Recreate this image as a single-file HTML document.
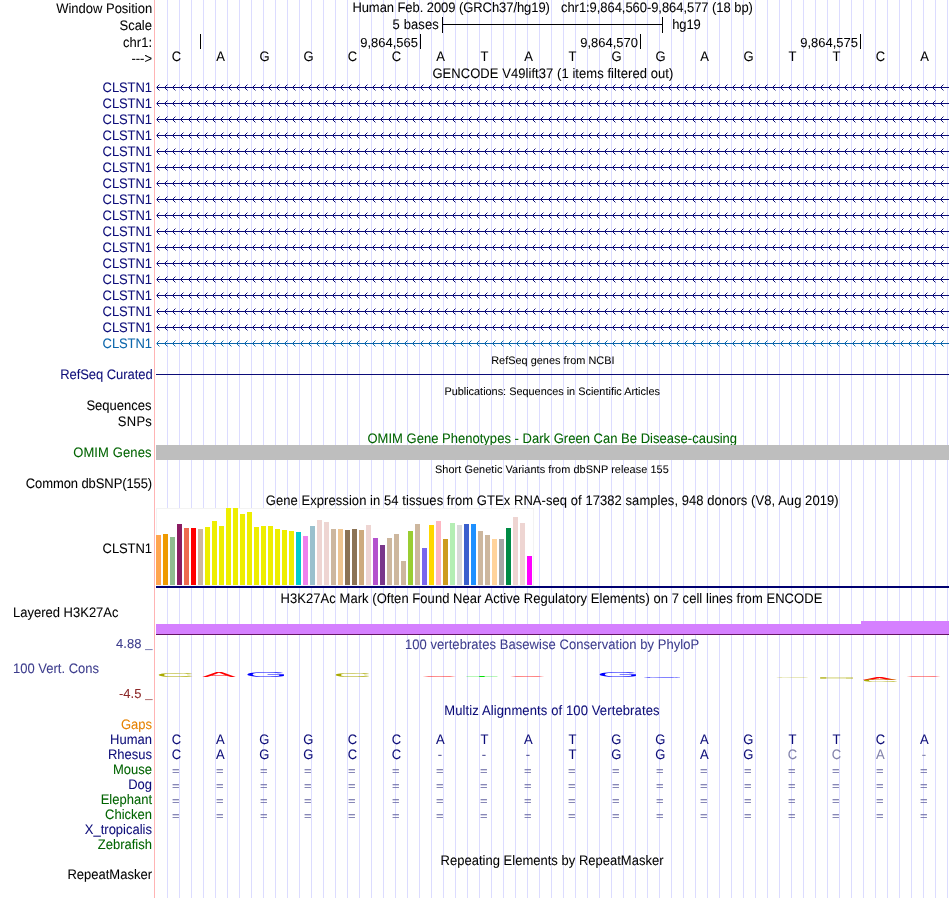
<!DOCTYPE html>
<html><head><meta charset="utf-8"><title>UCSC Genome Browser</title>
<style>
html,body{margin:0;padding:0;background:#fff}
#p{position:relative;width:950px;height:898px;overflow:hidden;will-change:transform;font-family:"Liberation Sans",sans-serif;font-size:13px;color:#000}
.t{position:absolute;white-space:nowrap;line-height:1;-webkit-text-stroke:.06px;text-rendering:geometricPrecision;transform:scaleY(1.06);transform-origin:0 84.65%}
.b{position:absolute}
#g{position:absolute;left:167px;top:0;width:783px;height:898px;background-image:linear-gradient(90deg,#dcdcff 1px,transparent 1px);background-size:12px 100%}
#r{position:absolute;left:154px;top:0;width:1px;height:898px;background:#ffb4b4}
</style></head><body><div id="p"><div id="g"></div><div id="r"></div>
<span id="t1" class="t" style="top:2.00px;left:56.20px;letter-spacing:-0.007px;">Window Position</span>
<span id="t2" class="t" style="top:19.00px;right:798.00px;">Scale</span>
<span id="t3" class="t" style="top:36.00px;right:798.00px;">chr1:</span>
<span id="t4" class="t" style="top:52.00px;right:798.00px;">---&gt;</span>
<span id="t5" class="t" style="top:1.00px;left:352.40px;letter-spacing:-0.068px;">Human Feb. 2009 (GRCh37/hg19)</span>
<span id="t6" class="t" style="top:1.00px;left:561.00px;letter-spacing:-0.058px;">chr1:9,864,560-9,864,577 (18 bp)</span>
<span id="t7" class="t" style="top:17.60px;left:392.60px;letter-spacing:0.117px;">5 bases</span>
<span id="t8" class="t" style="top:17.60px;left:672.20px;letter-spacing:-0.133px;">hg19</span>
<div class="b" style="left:442px;top:17px;width:1px;height:16px;background:#000;"></div>
<div class="b" style="left:662px;top:17px;width:1px;height:16px;background:#000;"></div>
<div class="b" style="left:442px;top:24px;width:221px;height:1px;background:#000;"></div>
<div class="b" style="left:200px;top:34px;width:1px;height:15px;background:#000;"></div>
<div class="b" style="left:420px;top:34px;width:1px;height:15px;background:#000;"></div>
<span id="t9" class="t" style="top:36.00px;transform:scaleY(1);right:532.00px;">9,864,565</span>
<div class="b" style="left:640px;top:34px;width:1px;height:15px;background:#000;"></div>
<span id="t10" class="t" style="top:36.00px;transform:scaleY(1);right:312.00px;">9,864,570</span>
<div class="b" style="left:860px;top:34px;width:1px;height:15px;background:#000;"></div>
<span id="t11" class="t" style="top:36.00px;transform:scaleY(1);right:92.00px;">9,864,575</span>
<span id="t12" class="t" style="top:50.00px;left:156.50px;width:40px;text-align:center;">C</span>
<span id="t13" class="t" style="top:50.00px;left:200.50px;width:40px;text-align:center;">A</span>
<span id="t14" class="t" style="top:50.00px;left:244.50px;width:40px;text-align:center;">G</span>
<span id="t15" class="t" style="top:50.00px;left:288.50px;width:40px;text-align:center;">G</span>
<span id="t16" class="t" style="top:50.00px;left:332.50px;width:40px;text-align:center;">C</span>
<span id="t17" class="t" style="top:50.00px;left:376.50px;width:40px;text-align:center;">C</span>
<span id="t18" class="t" style="top:50.00px;left:420.50px;width:40px;text-align:center;">A</span>
<span id="t19" class="t" style="top:50.00px;left:464.50px;width:40px;text-align:center;">T</span>
<span id="t20" class="t" style="top:50.00px;left:508.50px;width:40px;text-align:center;">A</span>
<span id="t21" class="t" style="top:50.00px;left:552.50px;width:40px;text-align:center;">T</span>
<span id="t22" class="t" style="top:50.00px;left:596.50px;width:40px;text-align:center;">G</span>
<span id="t23" class="t" style="top:50.00px;left:640.50px;width:40px;text-align:center;">G</span>
<span id="t24" class="t" style="top:50.00px;left:684.50px;width:40px;text-align:center;">A</span>
<span id="t25" class="t" style="top:50.00px;left:728.50px;width:40px;text-align:center;">G</span>
<span id="t26" class="t" style="top:50.00px;left:772.50px;width:40px;text-align:center;">T</span>
<span id="t27" class="t" style="top:50.00px;left:816.50px;width:40px;text-align:center;">T</span>
<span id="t28" class="t" style="top:50.00px;left:860.50px;width:40px;text-align:center;">C</span>
<span id="t29" class="t" style="top:50.00px;left:904.50px;width:40px;text-align:center;">A</span>
<span id="t30" class="t" style="top:67.00px;left:432.40px;letter-spacing:0.062px;">GENCODE V49lift37 (1 items filtered out)</span>
<span id="t31" class="t" style="top:81.00px;color:#0c0c78;left:102.60px;letter-spacing:-0.100px;">CLSTN1</span>
<span id="t32" class="t" style="top:97.00px;color:#0c0c78;left:102.60px;letter-spacing:-0.100px;">CLSTN1</span>
<span id="t33" class="t" style="top:113.00px;color:#0c0c78;left:102.60px;letter-spacing:-0.100px;">CLSTN1</span>
<span id="t34" class="t" style="top:129.00px;color:#0c0c78;left:102.60px;letter-spacing:-0.100px;">CLSTN1</span>
<span id="t35" class="t" style="top:145.00px;color:#0c0c78;left:102.60px;letter-spacing:-0.100px;">CLSTN1</span>
<span id="t36" class="t" style="top:161.00px;color:#0c0c78;left:102.60px;letter-spacing:-0.100px;">CLSTN1</span>
<span id="t37" class="t" style="top:177.00px;color:#0c0c78;left:102.60px;letter-spacing:-0.100px;">CLSTN1</span>
<span id="t38" class="t" style="top:193.00px;color:#0c0c78;left:102.60px;letter-spacing:-0.100px;">CLSTN1</span>
<span id="t39" class="t" style="top:209.00px;color:#0c0c78;left:102.60px;letter-spacing:-0.100px;">CLSTN1</span>
<span id="t40" class="t" style="top:225.00px;color:#0c0c78;left:102.60px;letter-spacing:-0.100px;">CLSTN1</span>
<span id="t41" class="t" style="top:241.00px;color:#0c0c78;left:102.60px;letter-spacing:-0.100px;">CLSTN1</span>
<span id="t42" class="t" style="top:257.00px;color:#0c0c78;left:102.60px;letter-spacing:-0.100px;">CLSTN1</span>
<span id="t43" class="t" style="top:273.00px;color:#0c0c78;left:102.60px;letter-spacing:-0.100px;">CLSTN1</span>
<span id="t44" class="t" style="top:289.00px;color:#0c0c78;left:102.60px;letter-spacing:-0.100px;">CLSTN1</span>
<span id="t45" class="t" style="top:305.00px;color:#0c0c78;left:102.60px;letter-spacing:-0.100px;">CLSTN1</span>
<span id="t46" class="t" style="top:321.00px;color:#0c0c78;left:102.60px;letter-spacing:-0.100px;">CLSTN1</span>
<span id="t47" class="t" style="top:337.00px;color:#0c66ab;left:102.60px;letter-spacing:-0.100px;">CLSTN1</span>
<svg class="b" style="left:0;top:0" width="950" height="898" viewBox="0 0 950 898" shape-rendering="crispEdges"><defs><pattern id="cn" x="156" y="0" width="8" height="7" patternUnits="userSpaceOnUse"><g fill="#0c0c78"><rect x="1" y="2" width="1" height="1"/><rect x="1" y="4" width="1" height="1"/><rect x="2" y="1" width="1" height="1"/><rect x="2" y="5" width="1" height="1"/><rect x="3" y="0" width="1" height="1" opacity=".45"/><rect x="3" y="6" width="1" height="1" opacity=".45"/></g></pattern><pattern id="ct" x="156" y="0" width="8" height="7" patternUnits="userSpaceOnUse"><g fill="#0c66ab"><rect x="1" y="2" width="1" height="1"/><rect x="1" y="4" width="1" height="1"/><rect x="2" y="1" width="1" height="1"/><rect x="2" y="5" width="1" height="1"/><rect x="3" y="0" width="1" height="1" opacity=".45"/><rect x="3" y="6" width="1" height="1" opacity=".45"/></g></pattern></defs><g transform="translate(0,84)"><rect x="156" y="0" width="788" height="7" fill="url(#cn)"/><rect x="157" y="3" width="792" height="1" fill="#0c0c78"/><rect x="156" y="3" width="1" height="1" fill="#0c0c78" opacity=".5"/></g><g transform="translate(0,100)"><rect x="156" y="0" width="788" height="7" fill="url(#cn)"/><rect x="157" y="3" width="792" height="1" fill="#0c0c78"/><rect x="156" y="3" width="1" height="1" fill="#0c0c78" opacity=".5"/></g><g transform="translate(0,116)"><rect x="156" y="0" width="788" height="7" fill="url(#cn)"/><rect x="157" y="3" width="792" height="1" fill="#0c0c78"/><rect x="156" y="3" width="1" height="1" fill="#0c0c78" opacity=".5"/></g><g transform="translate(0,132)"><rect x="156" y="0" width="788" height="7" fill="url(#cn)"/><rect x="157" y="3" width="792" height="1" fill="#0c0c78"/><rect x="156" y="3" width="1" height="1" fill="#0c0c78" opacity=".5"/></g><g transform="translate(0,148)"><rect x="156" y="0" width="788" height="7" fill="url(#cn)"/><rect x="157" y="3" width="792" height="1" fill="#0c0c78"/><rect x="156" y="3" width="1" height="1" fill="#0c0c78" opacity=".5"/></g><g transform="translate(0,164)"><rect x="156" y="0" width="788" height="7" fill="url(#cn)"/><rect x="157" y="3" width="792" height="1" fill="#0c0c78"/><rect x="156" y="3" width="1" height="1" fill="#0c0c78" opacity=".5"/></g><g transform="translate(0,180)"><rect x="156" y="0" width="788" height="7" fill="url(#cn)"/><rect x="157" y="3" width="792" height="1" fill="#0c0c78"/><rect x="156" y="3" width="1" height="1" fill="#0c0c78" opacity=".5"/></g><g transform="translate(0,196)"><rect x="156" y="0" width="788" height="7" fill="url(#cn)"/><rect x="157" y="3" width="792" height="1" fill="#0c0c78"/><rect x="156" y="3" width="1" height="1" fill="#0c0c78" opacity=".5"/></g><g transform="translate(0,212)"><rect x="156" y="0" width="788" height="7" fill="url(#cn)"/><rect x="157" y="3" width="792" height="1" fill="#0c0c78"/><rect x="156" y="3" width="1" height="1" fill="#0c0c78" opacity=".5"/></g><g transform="translate(0,228)"><rect x="156" y="0" width="788" height="7" fill="url(#cn)"/><rect x="157" y="3" width="792" height="1" fill="#0c0c78"/><rect x="156" y="3" width="1" height="1" fill="#0c0c78" opacity=".5"/></g><g transform="translate(0,244)"><rect x="156" y="0" width="788" height="7" fill="url(#cn)"/><rect x="157" y="3" width="792" height="1" fill="#0c0c78"/><rect x="156" y="3" width="1" height="1" fill="#0c0c78" opacity=".5"/></g><g transform="translate(0,260)"><rect x="156" y="0" width="788" height="7" fill="url(#cn)"/><rect x="157" y="3" width="792" height="1" fill="#0c0c78"/><rect x="156" y="3" width="1" height="1" fill="#0c0c78" opacity=".5"/></g><g transform="translate(0,276)"><rect x="156" y="0" width="788" height="7" fill="url(#cn)"/><rect x="157" y="3" width="792" height="1" fill="#0c0c78"/><rect x="156" y="3" width="1" height="1" fill="#0c0c78" opacity=".5"/></g><g transform="translate(0,292)"><rect x="156" y="0" width="788" height="7" fill="url(#cn)"/><rect x="157" y="3" width="792" height="1" fill="#0c0c78"/><rect x="156" y="3" width="1" height="1" fill="#0c0c78" opacity=".5"/></g><g transform="translate(0,308)"><rect x="156" y="0" width="788" height="7" fill="url(#cn)"/><rect x="157" y="3" width="792" height="1" fill="#0c0c78"/><rect x="156" y="3" width="1" height="1" fill="#0c0c78" opacity=".5"/></g><g transform="translate(0,324)"><rect x="156" y="0" width="788" height="7" fill="url(#cn)"/><rect x="157" y="3" width="792" height="1" fill="#0c0c78"/><rect x="156" y="3" width="1" height="1" fill="#0c0c78" opacity=".5"/></g><g transform="translate(0,340)"><rect x="156" y="0" width="788" height="7" fill="url(#ct)"/><rect x="157" y="3" width="792" height="1" fill="#0c66ab"/><rect x="156" y="3" width="1" height="1" fill="#0c66ab" opacity=".5"/></g></svg>
<span id="t48" class="t" style="top:355.97px;font-size:10.9px;transform:scaleY(1);left:491.20px;letter-spacing:0.024px;">RefSeq genes from NCBI</span>
<span id="t49" class="t" style="top:368.00px;color:#0c0c78;left:60.20px;letter-spacing:-0.054px;">RefSeq Curated</span>
<div class="b" style="left:156px;top:374px;width:793px;height:1px;background:#0c0c78;"></div>
<span id="t50" class="t" style="top:386.77px;font-size:10.9px;transform:scaleY(1);left:444.40px;">Publications: Sequences in Scientific Articles</span>
<span id="t51" class="t" style="top:399.00px;left:86.40px;">Sequences</span>
<span id="t52" class="t" style="top:415.00px;left:117.80px;letter-spacing:0.267px;">SNPs</span>
<span id="t53" class="t" style="top:431.50px;color:#006400;left:367.40px;letter-spacing:0.022px;">OMIM Gene Phenotypes - Dark Green Can Be Disease-causing</span>
<span id="t54" class="t" style="top:446.00px;color:#006400;left:73.20px;letter-spacing:0.111px;">OMIM Genes</span>
<div class="b" style="left:156px;top:445px;width:793px;height:15px;background:#bebebe;"></div>
<span id="t55" class="t" style="top:464.97px;font-size:10.9px;transform:scaleY(1);left:435.00px;letter-spacing:0.066px;">Short Genetic Variants from dbSNP release 155</span>
<span id="t56" class="t" style="top:477.30px;left:25.80px;letter-spacing:-0.094px;">Common dbSNP(155)</span>
<span id="t57" class="t" style="top:493.50px;left:265.80px;letter-spacing:0.062px;">Gene Expression in 54 tissues from GTEx RNA-seq of 17382 samples, 948 donors (V8, Aug 2019)</span>
<span id="t58" class="t" style="top:542.40px;left:102.60px;letter-spacing:-0.100px;">CLSTN1</span>
<div class="b" style="left:156px;top:508px;width:378px;height:78px;background:#fff;box-sizing:border-box;border:1px solid #f3f3f3"></div>
<div class="b" style="left:156px;top:535px;width:5px;height:50px;background:rgb(255,165,79);"></div>
<div class="b" style="left:163px;top:534px;width:5px;height:51px;background:rgb(238,154,0);"></div>
<div class="b" style="left:170px;top:537px;width:5px;height:48px;background:rgb(143,188,143);"></div>
<div class="b" style="left:177px;top:524px;width:5px;height:61px;background:rgb(139,28,98);"></div>
<div class="b" style="left:184px;top:528px;width:5px;height:57px;background:rgb(238,106,80);"></div>
<div class="b" style="left:191px;top:528px;width:5px;height:57px;background:rgb(255,0,0);"></div>
<div class="b" style="left:198px;top:529px;width:5px;height:56px;background:rgb(205,183,158);"></div>
<div class="b" style="left:205px;top:527px;width:5px;height:58px;background:rgb(238,238,0);"></div>
<div class="b" style="left:212px;top:521px;width:5px;height:64px;background:rgb(238,238,0);"></div>
<div class="b" style="left:219px;top:526px;width:5px;height:59px;background:rgb(238,238,0);"></div>
<div class="b" style="left:226px;top:508px;width:5px;height:77px;background:rgb(238,238,0);"></div>
<div class="b" style="left:233px;top:508px;width:5px;height:77px;background:rgb(238,238,0);"></div>
<div class="b" style="left:240px;top:514px;width:5px;height:71px;background:rgb(238,238,0);"></div>
<div class="b" style="left:247px;top:512px;width:5px;height:73px;background:rgb(238,238,0);"></div>
<div class="b" style="left:254px;top:527px;width:5px;height:58px;background:rgb(238,238,0);"></div>
<div class="b" style="left:261px;top:526px;width:5px;height:59px;background:rgb(238,238,0);"></div>
<div class="b" style="left:268px;top:526px;width:5px;height:59px;background:rgb(238,238,0);"></div>
<div class="b" style="left:275px;top:529px;width:5px;height:56px;background:rgb(238,238,0);"></div>
<div class="b" style="left:282px;top:530px;width:5px;height:55px;background:rgb(238,238,0);"></div>
<div class="b" style="left:289px;top:531px;width:5px;height:54px;background:rgb(238,238,0);"></div>
<div class="b" style="left:296px;top:532px;width:5px;height:53px;background:rgb(0,205,205);"></div>
<div class="b" style="left:303px;top:536px;width:5px;height:49px;background:rgb(238,130,238);"></div>
<div class="b" style="left:310px;top:526px;width:5px;height:59px;background:rgb(154,192,205);"></div>
<div class="b" style="left:317px;top:520px;width:5px;height:65px;background:rgb(238,213,210);"></div>
<div class="b" style="left:324px;top:522px;width:5px;height:63px;background:rgb(238,213,210);"></div>
<div class="b" style="left:331px;top:529px;width:5px;height:56px;background:rgb(205,183,158);"></div>
<div class="b" style="left:338px;top:529px;width:5px;height:56px;background:rgb(238,197,145);"></div>
<div class="b" style="left:345px;top:530px;width:5px;height:55px;background:rgb(139,115,85);"></div>
<div class="b" style="left:352px;top:529px;width:5px;height:56px;background:rgb(139,115,85);"></div>
<div class="b" style="left:359px;top:530px;width:5px;height:55px;background:rgb(205,170,125);"></div>
<div class="b" style="left:366px;top:525px;width:5px;height:60px;background:rgb(238,213,210);"></div>
<div class="b" style="left:373px;top:538px;width:5px;height:47px;background:rgb(180,82,205);"></div>
<div class="b" style="left:380px;top:545px;width:5px;height:40px;background:rgb(122,55,139);"></div>
<div class="b" style="left:387px;top:538px;width:5px;height:47px;background:rgb(205,183,158);"></div>
<div class="b" style="left:394px;top:534px;width:5px;height:51px;background:rgb(205,183,158);"></div>
<div class="b" style="left:401px;top:561px;width:5px;height:24px;background:rgb(205,183,158);"></div>
<div class="b" style="left:408px;top:531px;width:5px;height:54px;background:rgb(154,205,50);"></div>
<div class="b" style="left:415px;top:524px;width:5px;height:61px;background:rgb(205,183,158);"></div>
<div class="b" style="left:422px;top:548px;width:5px;height:37px;background:rgb(122,103,238);"></div>
<div class="b" style="left:429px;top:525px;width:5px;height:60px;background:rgb(255,215,0);"></div>
<div class="b" style="left:436px;top:521px;width:5px;height:64px;background:rgb(255,182,193);"></div>
<div class="b" style="left:443px;top:539px;width:5px;height:46px;background:rgb(205,155,29);"></div>
<div class="b" style="left:450px;top:523px;width:5px;height:62px;background:rgb(180,238,180);"></div>
<div class="b" style="left:457px;top:525px;width:5px;height:60px;background:rgb(217,217,217);"></div>
<div class="b" style="left:464px;top:524px;width:5px;height:61px;background:rgb(58,95,205);"></div>
<div class="b" style="left:471px;top:524px;width:5px;height:61px;background:rgb(30,144,255);"></div>
<div class="b" style="left:478px;top:531px;width:5px;height:54px;background:rgb(205,183,158);"></div>
<div class="b" style="left:485px;top:535px;width:5px;height:50px;background:rgb(205,183,158);"></div>
<div class="b" style="left:492px;top:539px;width:5px;height:46px;background:rgb(255,211,155);"></div>
<div class="b" style="left:499px;top:539px;width:5px;height:46px;background:rgb(166,166,166);"></div>
<div class="b" style="left:506px;top:528px;width:5px;height:57px;background:rgb(0,139,69);"></div>
<div class="b" style="left:513px;top:517px;width:5px;height:68px;background:rgb(238,213,210);"></div>
<div class="b" style="left:520px;top:523px;width:5px;height:62px;background:rgb(238,213,210);"></div>
<div class="b" style="left:527px;top:556px;width:5px;height:29px;background:rgb(255,0,255);"></div>
<div class="b" style="left:156px;top:586px;width:793px;height:2px;background:#000070;"></div>
<span id="t59" class="t" style="top:591.70px;left:280.60px;letter-spacing:0.049px;">H3K27Ac Mark (Often Found Near Active Regulatory Elements) on 7 cell lines from ENCODE</span>
<span id="t60" class="t" style="top:606.00px;left:13.00px;">Layered H3K27Ac</span>
<div class="b" style="left:156px;top:624px;width:705px;height:10px;background:#d580ff;"></div>
<div class="b" style="left:861px;top:621px;width:88px;height:13px;background:#d580ff;"></div>
<div class="b" style="left:156px;top:634px;width:793px;height:1px;background:#641464;"></div>
<span id="t61" class="t" style="top:637.70px;color:#3c3c8c;left:405.00px;letter-spacing:0.050px;">100 vertebrates Basewise Conservation by PhyloP</span>
<span id="t62" class="t" style="top:637.00px;color:#3c3c8c;transform:scaleY(1);right:808.60px;">4.88</span>
<span id="t63" class="t" style="top:636.70px;color:#3c3c8c;transform:scaleY(0.8);right:797.50px;">_</span>
<span id="t64" class="t" style="top:661.80px;color:#3c3c8c;left:13.00px;">100 Vert. Cons</span>
<span id="t65" class="t" style="top:687.00px;color:#8c2828;transform:scaleY(1);right:808.60px;">-4.5</span>
<span id="t66" class="t" style="top:686.70px;color:#8c2828;transform:scaleY(0.8);right:797.50px;">_</span>
<svg class="b" style="left:0;top:636px" width="950" height="64" viewBox="0 636 950 64" font-family="Liberation Sans, sans-serif" font-size="10"><text transform="translate(156.11,677.14) scale(5.381,0.5915)" fill="#aaaa00">C</text><text transform="translate(202.35,677.00) scale(5.030,0.7591)" fill="#ff0000">A</text><text transform="translate(244.49,676.93) scale(5.618,0.7042)" fill="#0000ff">G</text><text transform="translate(333.12,677.14) scale(5.365,0.5915)" fill="#aaaa00">C</text><text transform="translate(465.02,676.90) scale(5.522,0.1159)" fill="#00e000">T</text><text transform="translate(596.81,676.93) scale(5.588,0.7042)" fill="#0000ff">G</text><text transform="translate(641.47,677.94) scale(5.466,0.1268)" fill="#0000ff">G</text><text transform="translate(773.72,677.79) scale(5.159,0.0845)" fill="#aaaa00" fill-opacity="0.5">C</text><text transform="translate(862.14,680.10) scale(5.136,0.4088)" fill="#ff0000">A</text><text transform="translate(861.01,681.97) scale(5.381,0.2817)" fill="#aaaa00">C</text><defs><linearGradient id="ra"><stop offset="0" stop-color="#f00" stop-opacity="0"/><stop offset=".18" stop-color="#f00" stop-opacity=".5"/><stop offset=".5" stop-color="#f00" stop-opacity=".42"/><stop offset=".82" stop-color="#f00" stop-opacity=".5"/><stop offset="1" stop-color="#f00" stop-opacity="0"/></linearGradient></defs><rect x="422.6" y="676" width="33.4" height="1" fill="url(#ra)"/><rect x="510.2" y="676" width="34.2" height="1" fill="url(#ra)"/><rect x="906.4" y="676" width="34.2" height="1" fill="url(#ra)"/><g fill="#aaaa00"><rect x="820.2" y="677" width="32.8" height="1.8" opacity=".32"/><rect x="820.2" y="677" width="6" height="1.8" opacity=".55"/><rect x="846" y="677.6" width="7" height="1.3" opacity=".3"/></g></svg>
<span id="t67" class="t" style="top:703.50px;color:#0c0c78;left:444.20px;letter-spacing:0.123px;">Multiz Alignments of 100 Vertebrates</span>
<span id="t68" class="t" style="top:718.00px;color:#e68200;right:798.00px;">Gaps</span>
<span id="t69" class="t" style="top:733.00px;color:#0c0c78;right:798.00px;">Human</span>
<span id="t70" class="t" style="top:748.00px;color:#0c0c78;right:798.00px;">Rhesus</span>
<span id="t71" class="t" style="top:763.00px;color:#006400;right:798.00px;">Mouse</span>
<span id="t72" class="t" style="top:778.00px;color:#0c0c78;right:798.00px;">Dog</span>
<span id="t73" class="t" style="top:793.00px;color:#006400;right:798.00px;">Elephant</span>
<span id="t74" class="t" style="top:808.00px;color:#006400;right:798.00px;">Chicken</span>
<span id="t75" class="t" style="top:823.00px;color:#0c0c78;right:798.00px;">X_tropicalis</span>
<span id="t76" class="t" style="top:838.00px;color:#006400;right:798.00px;">Zebrafish</span>
<span id="t77" class="t" style="top:733.00px;color:#0c0c78;left:156.40px;width:40px;text-align:center;">C</span>
<span id="t78" class="t" style="top:733.00px;color:#0c0c78;left:200.40px;width:40px;text-align:center;">A</span>
<span id="t79" class="t" style="top:733.00px;color:#0c0c78;left:244.40px;width:40px;text-align:center;">G</span>
<span id="t80" class="t" style="top:733.00px;color:#0c0c78;left:288.40px;width:40px;text-align:center;">G</span>
<span id="t81" class="t" style="top:733.00px;color:#0c0c78;left:332.40px;width:40px;text-align:center;">C</span>
<span id="t82" class="t" style="top:733.00px;color:#0c0c78;left:376.40px;width:40px;text-align:center;">C</span>
<span id="t83" class="t" style="top:733.00px;color:#0c0c78;left:420.40px;width:40px;text-align:center;">A</span>
<span id="t84" class="t" style="top:733.00px;color:#0c0c78;left:464.40px;width:40px;text-align:center;">T</span>
<span id="t85" class="t" style="top:733.00px;color:#0c0c78;left:508.40px;width:40px;text-align:center;">A</span>
<span id="t86" class="t" style="top:733.00px;color:#0c0c78;left:552.40px;width:40px;text-align:center;">T</span>
<span id="t87" class="t" style="top:733.00px;color:#0c0c78;left:596.40px;width:40px;text-align:center;">G</span>
<span id="t88" class="t" style="top:733.00px;color:#0c0c78;left:640.40px;width:40px;text-align:center;">G</span>
<span id="t89" class="t" style="top:733.00px;color:#0c0c78;left:684.40px;width:40px;text-align:center;">A</span>
<span id="t90" class="t" style="top:733.00px;color:#0c0c78;left:728.40px;width:40px;text-align:center;">G</span>
<span id="t91" class="t" style="top:733.00px;color:#0c0c78;left:772.40px;width:40px;text-align:center;">T</span>
<span id="t92" class="t" style="top:733.00px;color:#0c0c78;left:816.40px;width:40px;text-align:center;">T</span>
<span id="t93" class="t" style="top:733.00px;color:#0c0c78;left:860.40px;width:40px;text-align:center;">C</span>
<span id="t94" class="t" style="top:733.00px;color:#0c0c78;left:904.40px;width:40px;text-align:center;">A</span>
<span id="t95" class="t" style="top:748.00px;color:#0c0c78;left:156.40px;width:40px;text-align:center;">C</span>
<span id="t96" class="t" style="top:748.00px;color:#0c0c78;left:200.40px;width:40px;text-align:center;">A</span>
<span id="t97" class="t" style="top:748.00px;color:#0c0c78;left:244.40px;width:40px;text-align:center;">G</span>
<span id="t98" class="t" style="top:748.00px;color:#0c0c78;left:288.40px;width:40px;text-align:center;">G</span>
<span id="t99" class="t" style="top:748.00px;color:#0c0c78;left:332.40px;width:40px;text-align:center;">C</span>
<span id="t100" class="t" style="top:748.00px;color:#0c0c78;left:376.40px;width:40px;text-align:center;">C</span>
<span id="t101" class="t" style="top:748.40px;color:#505096;left:420.00px;width:40px;text-align:center;">-</span>
<span id="t102" class="t" style="top:748.40px;color:#505096;left:464.00px;width:40px;text-align:center;">-</span>
<span id="t103" class="t" style="top:748.40px;color:#505096;left:508.00px;width:40px;text-align:center;">-</span>
<span id="t104" class="t" style="top:748.00px;color:#0c0c78;left:552.40px;width:40px;text-align:center;">T</span>
<span id="t105" class="t" style="top:748.00px;color:#0c0c78;left:596.40px;width:40px;text-align:center;">G</span>
<span id="t106" class="t" style="top:748.00px;color:#0c0c78;left:640.40px;width:40px;text-align:center;">G</span>
<span id="t107" class="t" style="top:748.00px;color:#0c0c78;left:684.40px;width:40px;text-align:center;">A</span>
<span id="t108" class="t" style="top:748.00px;color:#0c0c78;left:728.40px;width:40px;text-align:center;">G</span>
<span id="t109" class="t" style="top:748.00px;color:#8282aa;left:772.40px;width:40px;text-align:center;">C</span>
<span id="t110" class="t" style="top:748.00px;color:#8282aa;left:816.40px;width:40px;text-align:center;">C</span>
<span id="t111" class="t" style="top:748.00px;color:#8282aa;left:860.40px;width:40px;text-align:center;">A</span>
<span id="t112" class="t" style="top:748.40px;color:#8282aa;left:904.00px;width:40px;text-align:center;">-</span>
<span id="t113" class="t" style="top:763.60px;color:#6464a0;transform:scaleY(0.9);left:155.90px;width:40px;text-align:center;">=</span>
<span id="t114" class="t" style="top:763.60px;color:#6464a0;transform:scaleY(0.9);left:199.90px;width:40px;text-align:center;">=</span>
<span id="t115" class="t" style="top:763.60px;color:#6464a0;transform:scaleY(0.9);left:243.90px;width:40px;text-align:center;">=</span>
<span id="t116" class="t" style="top:763.60px;color:#6464a0;transform:scaleY(0.9);left:287.90px;width:40px;text-align:center;">=</span>
<span id="t117" class="t" style="top:763.60px;color:#6464a0;transform:scaleY(0.9);left:331.90px;width:40px;text-align:center;">=</span>
<span id="t118" class="t" style="top:763.60px;color:#6464a0;transform:scaleY(0.9);left:375.90px;width:40px;text-align:center;">=</span>
<span id="t119" class="t" style="top:763.60px;color:#6464a0;transform:scaleY(0.9);left:419.90px;width:40px;text-align:center;">=</span>
<span id="t120" class="t" style="top:763.60px;color:#6464a0;transform:scaleY(0.9);left:463.90px;width:40px;text-align:center;">=</span>
<span id="t121" class="t" style="top:763.60px;color:#6464a0;transform:scaleY(0.9);left:507.90px;width:40px;text-align:center;">=</span>
<span id="t122" class="t" style="top:763.60px;color:#6464a0;transform:scaleY(0.9);left:551.90px;width:40px;text-align:center;">=</span>
<span id="t123" class="t" style="top:763.60px;color:#6464a0;transform:scaleY(0.9);left:595.90px;width:40px;text-align:center;">=</span>
<span id="t124" class="t" style="top:763.60px;color:#6464a0;transform:scaleY(0.9);left:639.90px;width:40px;text-align:center;">=</span>
<span id="t125" class="t" style="top:763.60px;color:#6464a0;transform:scaleY(0.9);left:683.90px;width:40px;text-align:center;">=</span>
<span id="t126" class="t" style="top:763.60px;color:#6464a0;transform:scaleY(0.9);left:727.90px;width:40px;text-align:center;">=</span>
<span id="t127" class="t" style="top:763.60px;color:#6464a0;transform:scaleY(0.9);left:771.90px;width:40px;text-align:center;">=</span>
<span id="t128" class="t" style="top:763.60px;color:#6464a0;transform:scaleY(0.9);left:815.90px;width:40px;text-align:center;">=</span>
<span id="t129" class="t" style="top:763.60px;color:#6464a0;transform:scaleY(0.9);left:859.90px;width:40px;text-align:center;">=</span>
<span id="t130" class="t" style="top:763.60px;color:#6464a0;transform:scaleY(0.9);left:903.90px;width:40px;text-align:center;">=</span>
<span id="t131" class="t" style="top:778.60px;color:#6464a0;transform:scaleY(0.9);left:155.90px;width:40px;text-align:center;">=</span>
<span id="t132" class="t" style="top:778.60px;color:#6464a0;transform:scaleY(0.9);left:199.90px;width:40px;text-align:center;">=</span>
<span id="t133" class="t" style="top:778.60px;color:#6464a0;transform:scaleY(0.9);left:243.90px;width:40px;text-align:center;">=</span>
<span id="t134" class="t" style="top:778.60px;color:#6464a0;transform:scaleY(0.9);left:287.90px;width:40px;text-align:center;">=</span>
<span id="t135" class="t" style="top:778.60px;color:#6464a0;transform:scaleY(0.9);left:331.90px;width:40px;text-align:center;">=</span>
<span id="t136" class="t" style="top:778.60px;color:#6464a0;transform:scaleY(0.9);left:375.90px;width:40px;text-align:center;">=</span>
<span id="t137" class="t" style="top:778.60px;color:#6464a0;transform:scaleY(0.9);left:419.90px;width:40px;text-align:center;">=</span>
<span id="t138" class="t" style="top:778.60px;color:#6464a0;transform:scaleY(0.9);left:463.90px;width:40px;text-align:center;">=</span>
<span id="t139" class="t" style="top:778.60px;color:#6464a0;transform:scaleY(0.9);left:507.90px;width:40px;text-align:center;">=</span>
<span id="t140" class="t" style="top:778.60px;color:#6464a0;transform:scaleY(0.9);left:551.90px;width:40px;text-align:center;">=</span>
<span id="t141" class="t" style="top:778.60px;color:#6464a0;transform:scaleY(0.9);left:595.90px;width:40px;text-align:center;">=</span>
<span id="t142" class="t" style="top:778.60px;color:#6464a0;transform:scaleY(0.9);left:639.90px;width:40px;text-align:center;">=</span>
<span id="t143" class="t" style="top:778.60px;color:#6464a0;transform:scaleY(0.9);left:683.90px;width:40px;text-align:center;">=</span>
<span id="t144" class="t" style="top:778.60px;color:#6464a0;transform:scaleY(0.9);left:727.90px;width:40px;text-align:center;">=</span>
<span id="t145" class="t" style="top:778.60px;color:#6464a0;transform:scaleY(0.9);left:771.90px;width:40px;text-align:center;">=</span>
<span id="t146" class="t" style="top:778.60px;color:#6464a0;transform:scaleY(0.9);left:815.90px;width:40px;text-align:center;">=</span>
<span id="t147" class="t" style="top:778.60px;color:#6464a0;transform:scaleY(0.9);left:859.90px;width:40px;text-align:center;">=</span>
<span id="t148" class="t" style="top:778.60px;color:#6464a0;transform:scaleY(0.9);left:903.90px;width:40px;text-align:center;">=</span>
<span id="t149" class="t" style="top:793.60px;color:#6464a0;transform:scaleY(0.9);left:155.90px;width:40px;text-align:center;">=</span>
<span id="t150" class="t" style="top:793.60px;color:#6464a0;transform:scaleY(0.9);left:199.90px;width:40px;text-align:center;">=</span>
<span id="t151" class="t" style="top:793.60px;color:#6464a0;transform:scaleY(0.9);left:243.90px;width:40px;text-align:center;">=</span>
<span id="t152" class="t" style="top:793.60px;color:#6464a0;transform:scaleY(0.9);left:287.90px;width:40px;text-align:center;">=</span>
<span id="t153" class="t" style="top:793.60px;color:#6464a0;transform:scaleY(0.9);left:331.90px;width:40px;text-align:center;">=</span>
<span id="t154" class="t" style="top:793.60px;color:#6464a0;transform:scaleY(0.9);left:375.90px;width:40px;text-align:center;">=</span>
<span id="t155" class="t" style="top:793.60px;color:#6464a0;transform:scaleY(0.9);left:419.90px;width:40px;text-align:center;">=</span>
<span id="t156" class="t" style="top:793.60px;color:#6464a0;transform:scaleY(0.9);left:463.90px;width:40px;text-align:center;">=</span>
<span id="t157" class="t" style="top:793.60px;color:#6464a0;transform:scaleY(0.9);left:507.90px;width:40px;text-align:center;">=</span>
<span id="t158" class="t" style="top:793.60px;color:#6464a0;transform:scaleY(0.9);left:551.90px;width:40px;text-align:center;">=</span>
<span id="t159" class="t" style="top:793.60px;color:#6464a0;transform:scaleY(0.9);left:595.90px;width:40px;text-align:center;">=</span>
<span id="t160" class="t" style="top:793.60px;color:#6464a0;transform:scaleY(0.9);left:639.90px;width:40px;text-align:center;">=</span>
<span id="t161" class="t" style="top:793.60px;color:#6464a0;transform:scaleY(0.9);left:683.90px;width:40px;text-align:center;">=</span>
<span id="t162" class="t" style="top:793.60px;color:#6464a0;transform:scaleY(0.9);left:727.90px;width:40px;text-align:center;">=</span>
<span id="t163" class="t" style="top:793.60px;color:#6464a0;transform:scaleY(0.9);left:771.90px;width:40px;text-align:center;">=</span>
<span id="t164" class="t" style="top:793.60px;color:#6464a0;transform:scaleY(0.9);left:815.90px;width:40px;text-align:center;">=</span>
<span id="t165" class="t" style="top:793.60px;color:#6464a0;transform:scaleY(0.9);left:859.90px;width:40px;text-align:center;">=</span>
<span id="t166" class="t" style="top:793.60px;color:#6464a0;transform:scaleY(0.9);left:903.90px;width:40px;text-align:center;">=</span>
<span id="t167" class="t" style="top:808.60px;color:#6464a0;transform:scaleY(0.9);left:155.90px;width:40px;text-align:center;">=</span>
<span id="t168" class="t" style="top:808.60px;color:#6464a0;transform:scaleY(0.9);left:199.90px;width:40px;text-align:center;">=</span>
<span id="t169" class="t" style="top:808.60px;color:#6464a0;transform:scaleY(0.9);left:243.90px;width:40px;text-align:center;">=</span>
<span id="t170" class="t" style="top:808.60px;color:#6464a0;transform:scaleY(0.9);left:287.90px;width:40px;text-align:center;">=</span>
<span id="t171" class="t" style="top:808.60px;color:#6464a0;transform:scaleY(0.9);left:331.90px;width:40px;text-align:center;">=</span>
<span id="t172" class="t" style="top:808.60px;color:#6464a0;transform:scaleY(0.9);left:375.90px;width:40px;text-align:center;">=</span>
<span id="t173" class="t" style="top:808.60px;color:#6464a0;transform:scaleY(0.9);left:419.90px;width:40px;text-align:center;">=</span>
<span id="t174" class="t" style="top:808.60px;color:#6464a0;transform:scaleY(0.9);left:463.90px;width:40px;text-align:center;">=</span>
<span id="t175" class="t" style="top:808.60px;color:#6464a0;transform:scaleY(0.9);left:507.90px;width:40px;text-align:center;">=</span>
<span id="t176" class="t" style="top:808.60px;color:#6464a0;transform:scaleY(0.9);left:551.90px;width:40px;text-align:center;">=</span>
<span id="t177" class="t" style="top:808.60px;color:#6464a0;transform:scaleY(0.9);left:595.90px;width:40px;text-align:center;">=</span>
<span id="t178" class="t" style="top:808.60px;color:#6464a0;transform:scaleY(0.9);left:639.90px;width:40px;text-align:center;">=</span>
<span id="t179" class="t" style="top:808.60px;color:#6464a0;transform:scaleY(0.9);left:683.90px;width:40px;text-align:center;">=</span>
<span id="t180" class="t" style="top:808.60px;color:#6464a0;transform:scaleY(0.9);left:727.90px;width:40px;text-align:center;">=</span>
<span id="t181" class="t" style="top:808.60px;color:#6464a0;transform:scaleY(0.9);left:771.90px;width:40px;text-align:center;">=</span>
<span id="t182" class="t" style="top:808.60px;color:#6464a0;transform:scaleY(0.9);left:815.90px;width:40px;text-align:center;">=</span>
<span id="t183" class="t" style="top:808.60px;color:#6464a0;transform:scaleY(0.9);left:859.90px;width:40px;text-align:center;">=</span>
<span id="t184" class="t" style="top:808.60px;color:#6464a0;transform:scaleY(0.9);left:903.90px;width:40px;text-align:center;">=</span>
<span id="t185" class="t" style="top:853.50px;left:440.60px;letter-spacing:0.012px;">Repeating Elements by RepeatMasker</span>
<span id="t186" class="t" style="top:867.70px;right:798.00px;">RepeatMasker</span>
</div></body></html>
